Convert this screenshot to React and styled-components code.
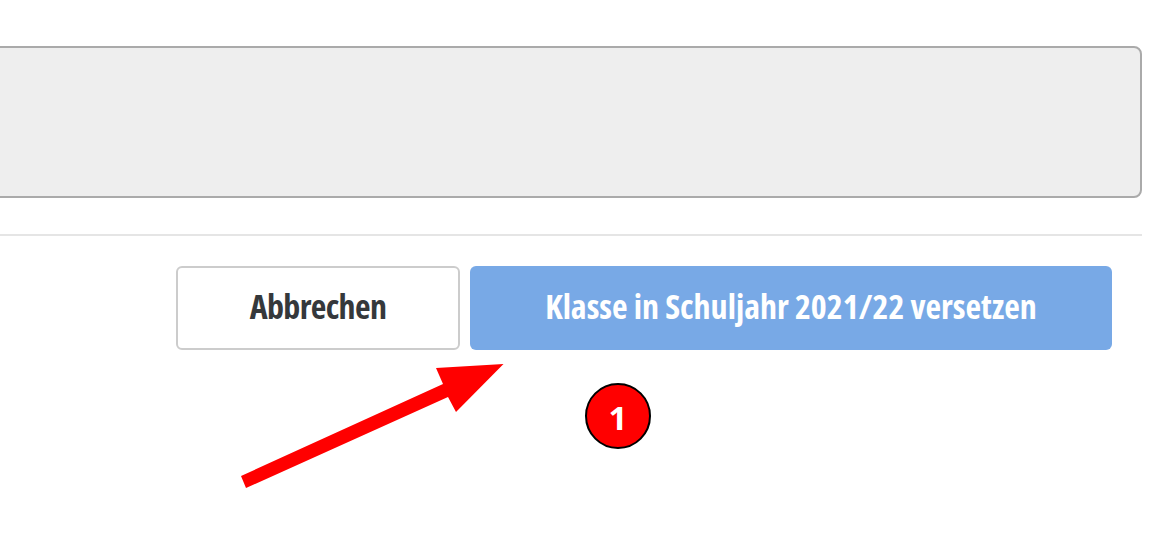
import React from 'react'
import styled, { createGlobalStyle } from 'styled-components';

const GlobalStyle = createGlobalStyle`
    html, body {
        margin: 0;
        background: #fff;
    }
`;

export default function App() {
    return (
        <Page>
            <GlobalStyle />
            <TextPanel />
            <Divider />
            <Actions>
                <CancelButton>Abbrechen</CancelButton>
                <SubmitButton>Klasse in Schuljahr 2021/22 versetzen</SubmitButton>
            </Actions>
            <Arrow viewBox="0 0 1166 554" aria-hidden="true">
                <polygon
                    fill="#ff0000"
                    points="241,476 443,384 436,368 503.5,364 456,412 448,397 246,488"
                />
            </Arrow>
            <StepBadge>1</StepBadge>
        </Page>
    )
}

const Page = styled.div`
    position: relative;
    box-sizing: border-box;
    width: 1166px;
    height: 554px;
    padding-top: 46px;
    overflow: hidden;
    background: #fff;
`;

const TextPanel = styled.div`
    box-sizing: border-box;
    width: 1162px;
    height: 152px;
    margin-left: -20px;
    background: #eeeeee;
    border: 2px solid #aaaaaa;
    border-radius: 8px;
`;

const Divider = styled.div`
    width: 1142px;
    height: 2px;
    margin-top: 36px;
    background: #e5e5e5;
`;

const Actions = styled.div`
    display: flex;
    justify-content: flex-end;
    gap: 10px;
    margin-top: 30px;
    padding-right: 54px;
`;

const ActionButton = styled.button`
    box-sizing: border-box;
    height: 84px;
    padding: 0 0 5px;
    border-radius: 6px;
    font-family: "Open Sans", sans-serif;
    font-stretch: 75%;
    font-size: 34px;
    font-weight: 700;
`;

const CancelButton = styled(ActionButton)`
    width: 284px;
    background: #fff;
    border: 2px solid #cccccc;
    color: #35383b;
    letter-spacing: -0.65px;
`;

const SubmitButton = styled(ActionButton)`
    width: 642px;
    background: #78a9e6;
    border: 0;
    color: #fff;
`;

const Arrow = styled.svg`
    position: absolute;
    top: 0;
    left: 0;
    width: 1166px;
    height: 554px;
    pointer-events: none;
`;

const StepBadge = styled.div`
    position: absolute;
    top: 383px;
    left: 585px;
    box-sizing: border-box;
    display: flex;
    align-items: center;
    justify-content: center;
    width: 66px;
    height: 66px;
    padding-top: 2px;
    background: #ff0000;
    border: 2px solid #000;
    border-radius: 50%;
    color: #fff;
    font-family: "Open Sans", sans-serif;
    font-size: 33px;
    font-weight: 700;
`;
